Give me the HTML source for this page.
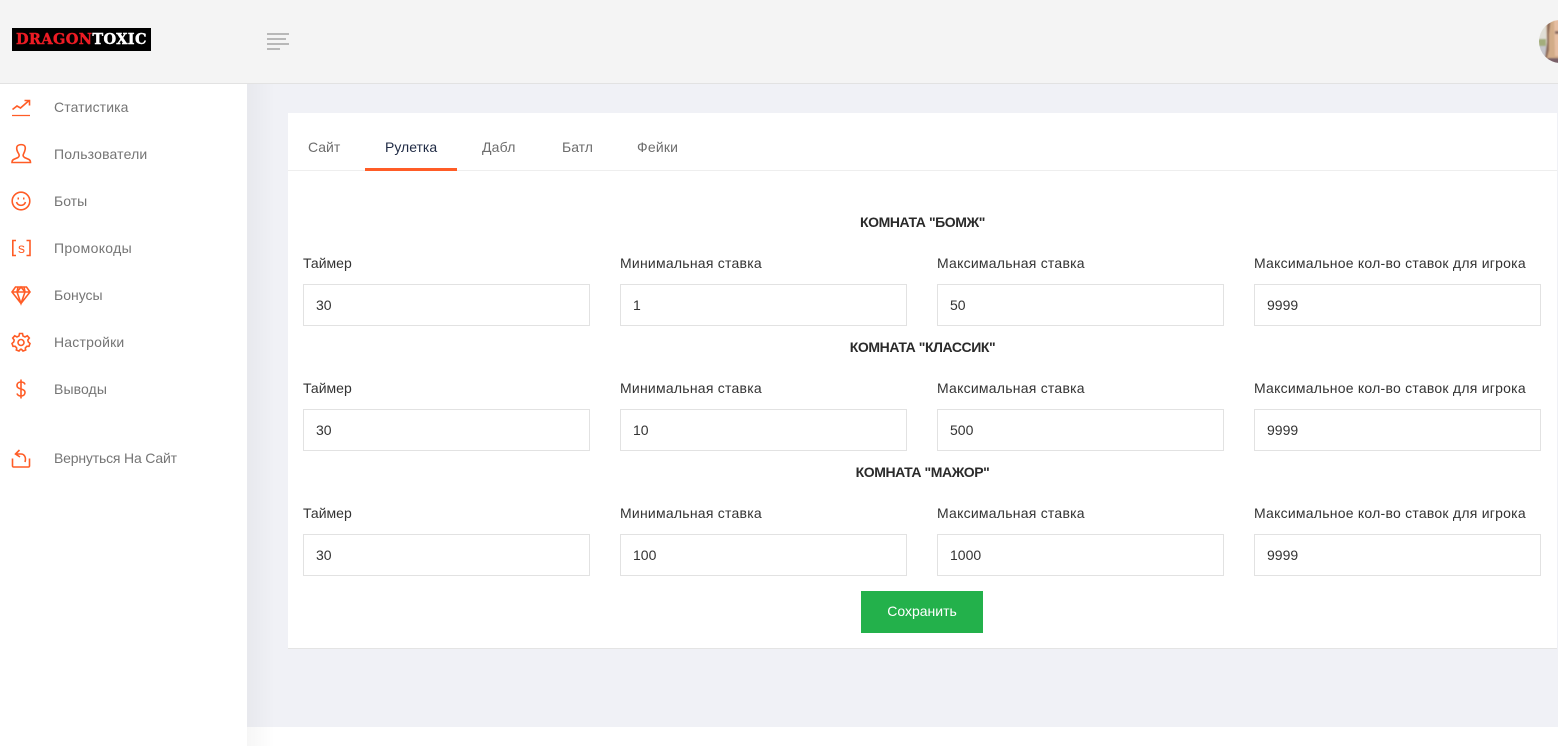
<!DOCTYPE html>
<html lang="ru"><head><meta charset="utf-8"><title>Настройки</title>
<style>
html,body{margin:0;padding:0;width:1558px;height:746px;overflow:hidden;background:#fff;font-family:"Liberation Sans",sans-serif;font-size:14px}
div,span,svg{position:absolute;white-space:nowrap}
.hdr{left:0;top:0;width:1558px;height:83px;background:#f4f4f4;border-bottom:1px solid #e2e2e2}
.main{left:247px;top:84px;width:1311px;height:643px;background:#f0f1f6}
.shade{left:247px;top:84px;width:28px;height:662px;background:linear-gradient(90deg,rgba(0,0,0,.035),rgba(0,0,0,0))}
.card{left:288px;top:113px;width:1269px;height:535px;background:#fff;border-bottom:1px solid #e4e4e4}
.nav{left:54px;color:#757575;line-height:20px}
.ic{left:9px;width:24px;height:24px;fill:none;stroke:#ff5c26;stroke-width:1.6}
.tab{top:137px;line-height:20px;color:#6d6d6d}
.h{left:288px;width:1269px;text-align:center;font-weight:bold;color:#2a2a2a;line-height:20px;letter-spacing:-.42px}
.l{color:#333;line-height:20px}
.m{letter-spacing:.24px}
.i{width:285px;height:40px;border:1px solid #e2e2e2;background:#fff;color:#333;line-height:41px;text-indent:12px}
</style></head><body>
<div class="main"></div><div class="shade"></div>
<div class="hdr"></div>

<div style="left:12px;top:28px;width:139px;height:23px;background:#000"></div>
<div style="left:16px;top:30px;font:bold 14.500px/20px 'DejaVu Serif',serif;letter-spacing:.36px;color:#ed1c24;-webkit-text-stroke:.4px #ed1c24">DRAGON<span style="position:static;color:#fff;-webkit-text-stroke:.4px #fff">TOXIC</span></div>

<svg style="left:267px;top:33px" width="22" height="17"><path d="M0 1H22M0 6H19M0 11H22M0 16H13" stroke="#7d7d7d" stroke-width="1" fill="none"/></svg>

<svg style="left:1539px;top:20px" width="19" height="43" viewBox="0 0 19 43"><defs><clipPath id="c"><circle cx="21.500" cy="21.500" r="21.500"/></clipPath><filter id="b"><feGaussianBlur stdDeviation=".8"/></filter></defs><g clip-path="url(#c)"><g filter="url(#b)"><rect x="-2" y="-2" width="23" height="47" fill="#e0ded6"/><rect x="-2" y="19" width="9" height="7" fill="#a3ad7c"/><rect x="-2" y="26" width="10" height="19" fill="#c6c6cc"/><path d="M7 -2H21V45H5L8 26Z" fill="#d2ac88"/><path d="M8 -2H12L10 14 10 30 8 38 6 38 8 22Z" fill="#8e6c5a"/><path d="M15 -2H21V36H16Z" fill="#e6bea2"/><rect x="16" y="11" width="5" height="3" fill="#8a6c62"/><rect x="8" y="38" width="13" height="7" fill="#7a6068"/></g></g></svg>

<svg class="ic" style="top:95px" viewBox="0 0 24 24"><path d="M3.500 14.500 8 11 11.500 13 19.500 6M15.500 5.500H20.500V10.500"/><path d="M3 20.500H21" stroke-width="1.200"/></svg>
<div class="nav" style="top:97px;letter-spacing:.1px">Статистика</div>
<svg class="ic" style="top:142px" viewBox="0 0 24 24"><path d="M8 4.500C9.500 2 15 2 16 4.500 17 7 15.500 10 14.500 12 13.700 13.500 14 14.500 15.500 15.500L20 17.500C21 18 21.500 19.500 21.500 20.500H3C3 19.500 3.500 18 4.500 17.500L9 15.500C10.500 14.500 10.500 13.500 9.800 12 8.500 10 7 7 8 4.500Z"/></svg>
<div class="nav" style="top:144px;letter-spacing:.17px">Пользователи</div>
<svg class="ic" style="top:189px" viewBox="0 0 24 24"><circle cx="12" cy="12" r="8.800"/><path d="M7.500 13C9 17.500 15 17.500 16.500 13"/><path d="M8.500 9.500H10M14 9.500H15.500" stroke-width="2"/></svg>
<div class="nav" style="top:191px">Боты</div>
<svg class="ic" style="top:236px" viewBox="0 0 24 24"><path d="M7 4.500H3.800V19.500H7M17.500 4.500H21V19.500H17.500"/></svg>
<div style="left:12px;top:238px;width:19px;text-align:center;color:#ff5c26;font:14px/20px 'Liberation Sans',sans-serif">s</div>
<div class="nav" style="top:238px;letter-spacing:.33px">Промокоды</div>
<svg class="ic" style="top:283px" viewBox="0 0 24 24"><path d="M6.500 4H17.500L21 9 12 20.500 3 9ZM3 9H21M9 4 8 9 12 20.500 16 9 15 4M8 9 12 4 16 9"/></svg>
<div class="nav" style="top:285px">Бонусы</div>
<svg class="ic" style="top:330px" viewBox="0 0 24 24"><path d="M10.500 3.500H13.500L14 6 16 7 18.300 5.800 20.300 8 18.800 10 19.300 12 21 13.500 20 16.300 17.800 16.300 16.300 18 16.700 20 14 21 12.500 19.300H11.500L10 21 7.300 20 7.700 18 6.200 16.300 4 16.300 3 13.500 4.700 12 5.200 10 3.700 8 5.700 5.800 8 7 10 6Z"/><circle cx="12" cy="12.500" r="3"/></svg>
<div class="nav" style="top:332px;letter-spacing:.2px">Настройки</div>
<svg class="ic" style="top:377px" viewBox="0 0 24 24"><path d="M16 7.500C15.500 5.500 14 5 12 5 9.500 5 8 6.500 8 8.500 8 13 16 11 16 15.500 16 17.500 14.500 19 12 19 10 19 8.500 18 8 16.500M12 2.500V21.500"/></svg>
<div class="nav" style="top:379px;letter-spacing:.1px">Выводы</div>
<svg class="ic" style="top:446px" viewBox="0 0 24 24"><path d="M3.500 12.500V20C3.500 20.500 4 21 4.500 21H19.500C20 21 20.500 20.500 20.500 20V12.500M10.500 4 6.500 8 11 11M6.500 8H12C15 8 17.500 11 16 16"/></svg>
<div class="nav" style="top:448px;letter-spacing:-.18px">Вернуться На Сайт</div>

<div class="card"></div>
<div style="left:288px;top:170px;width:1269px;height:1px;background:#eee"></div>
<div style="left:365px;top:168px;width:92px;height:3px;background:#ff5c26"></div>
<div class="tab" style="left:308px">Сайт</div>
<div class="tab" style="left:385px;color:#1f2a44">Рулетка</div>
<div class="tab" style="left:482px;letter-spacing:.2px">Дабл</div>
<div class="tab" style="left:562px">Батл</div>
<div class="tab" style="left:637px;letter-spacing:.2px">Фейки</div>

<div class="h" style="top:212px">КОМНАТА "БОМЖ"</div>
<div class="l" style="left:303px;top:253px">Таймер</div>
<div class="l m" style="left:620px;top:253px">Минимальная ставка</div>
<div class="l m" style="left:937px;top:253px">Максимальная ставка</div>
<div class="l m" style="left:1254px;top:253px">Максимальное кол-во ставок для игрока</div>
<div class="i" style="left:303px;top:284px">30</div>
<div class="i" style="left:620px;top:284px">1</div>
<div class="i" style="left:937px;top:284px">50</div>
<div class="i" style="left:1254px;top:284px">9999</div>

<div class="h" style="top:337px">КОМНАТА "КЛАССИК"</div>
<div class="l" style="left:303px;top:378px">Таймер</div>
<div class="l m" style="left:620px;top:378px">Минимальная ставка</div>
<div class="l m" style="left:937px;top:378px">Максимальная ставка</div>
<div class="l m" style="left:1254px;top:378px">Максимальное кол-во ставок для игрока</div>
<div class="i" style="left:303px;top:409px">30</div>
<div class="i" style="left:620px;top:409px">10</div>
<div class="i" style="left:937px;top:409px">500</div>
<div class="i" style="left:1254px;top:409px">9999</div>

<div class="h" style="top:462px">КОМНАТА "МАЖОР"</div>
<div class="l" style="left:303px;top:503px">Таймер</div>
<div class="l m" style="left:620px;top:503px">Минимальная ставка</div>
<div class="l m" style="left:937px;top:503px">Максимальная ставка</div>
<div class="l m" style="left:1254px;top:503px">Максимальное кол-во ставок для игрока</div>
<div class="i" style="left:303px;top:534px">30</div>
<div class="i" style="left:620px;top:534px">100</div>
<div class="i" style="left:937px;top:534px">1000</div>
<div class="i" style="left:1254px;top:534px">9999</div>

<div style="left:861px;top:591px;width:122px;height:42px;background:#23b14b;color:#fff;text-align:center;line-height:41px">Сохранить</div>
</body></html>
